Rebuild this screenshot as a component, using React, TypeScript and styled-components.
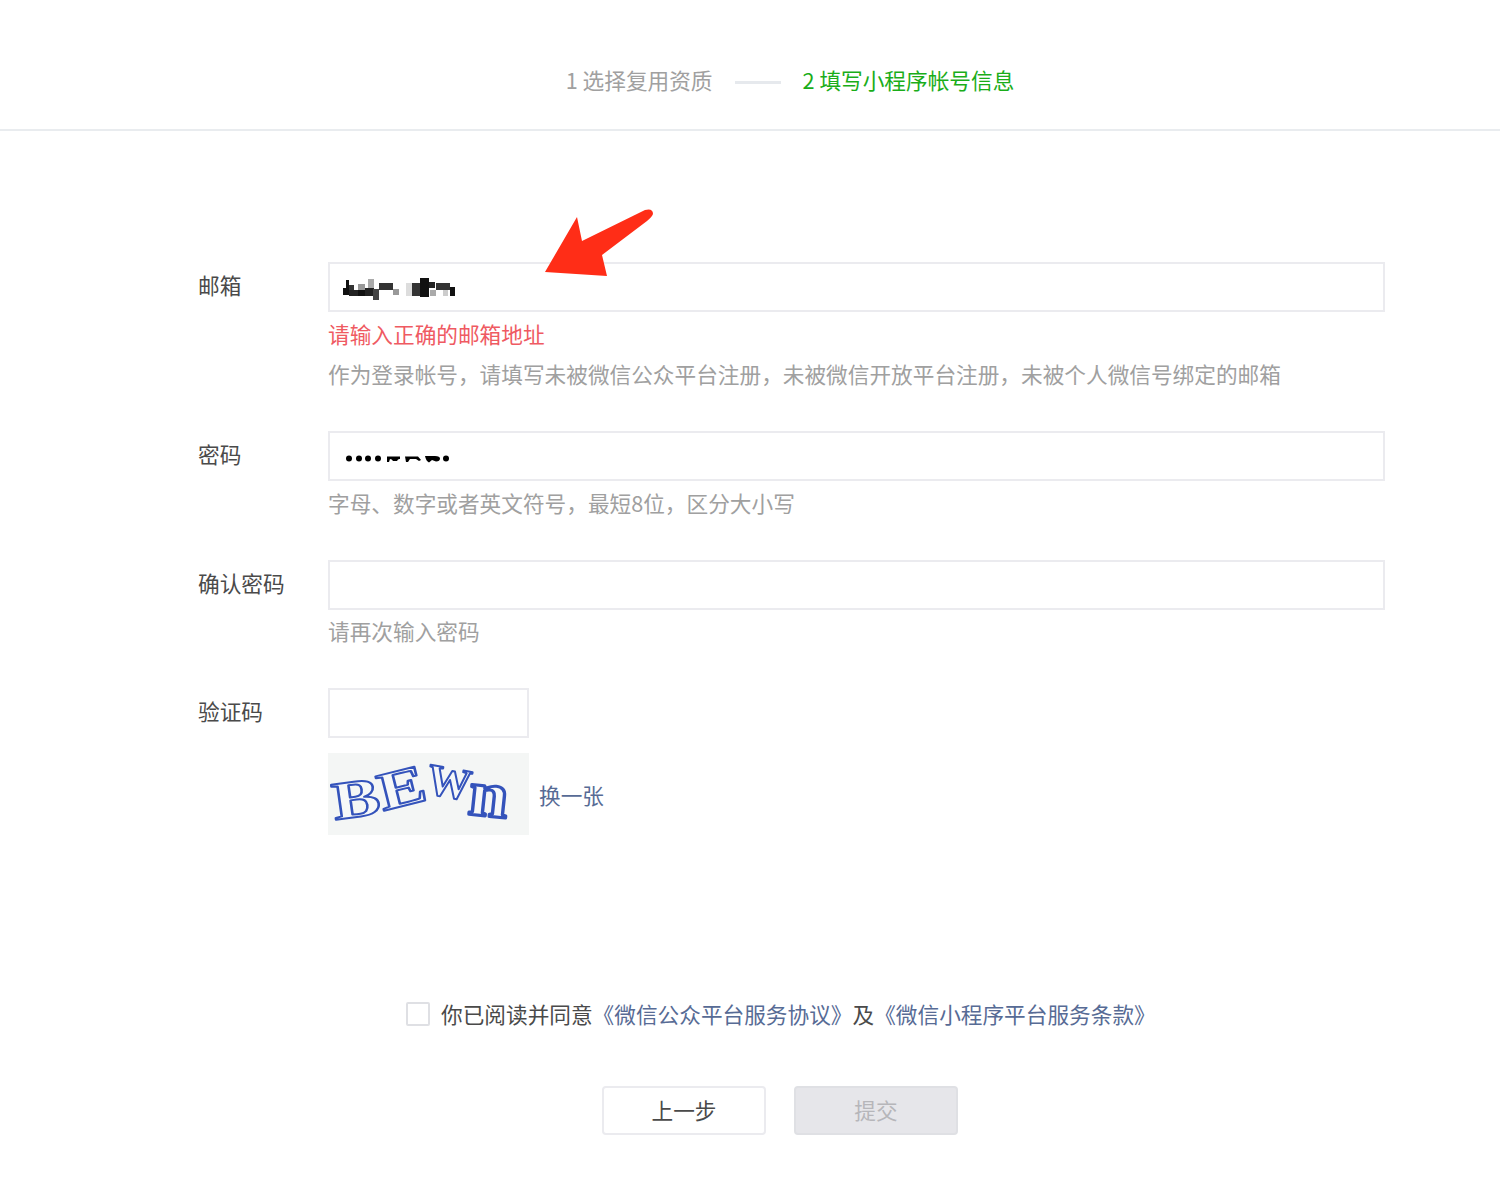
import React from "react";
import styled, { createGlobalStyle } from "styled-components";

const Global = createGlobalStyle`
  html, body { margin: 0; padding: 0; background: #fff; }
  body { font-family: "Noto Sans CJK SC", "Liberation Sans", sans-serif; }
`;

const Page = styled.div`
  width: 1500px;
  height: 1195px;
  position: relative;
  overflow: hidden;
  background: #fff;
`;

const Header = styled.header`
  box-sizing: border-box;
  height: 131px;
  border-bottom: 2px solid #e9ecef;
  display: flex;
  justify-content: center;
  align-items: flex-start;
  padding: 64px 0 0 80px;
`;

const Step = styled.span<{ $active?: boolean }>`
  font-size: 21.66px;
  line-height: 31px;
  color: ${(p) => (p.$active ? "#1aad19" : "#a0a0a0")};
  white-space: nowrap;
`;

const StepLine = styled.span`
  width: 46px;
  height: 3px;
  background: #e6e9ed;
  margin: 17px 22px 0 22px;
`;

const Form = styled.form`
  padding: 131px 0 0 198px;
  display: flex;
  flex-direction: column;
`;

const Row = styled.div<{ $gap: number }>`
  display: flex;
  margin-bottom: ${(p) => p.$gap}px;
`;

const Label = styled.label`
  width: 130px;
  flex: none;
  font-size: 21.66px;
  line-height: 46px;
  color: #4a4a4a;
`;

const Field = styled.div`
  display: flex;
  flex-direction: column;
  width: 1057px;
`;

const InputBox = styled.div<{ $small?: boolean }>`
  box-sizing: border-box;
  position: relative;
  width: ${(p) => (p.$small ? "201px" : "1057px")};
  height: 50px;
  border: 2px solid #ebebef;
  background: #fff;
`;

const MaskSvg = styled.svg`
  position: absolute;
  left: 13px;
  top: 14px;
  overflow: visible;
  filter: blur(0.3px);
`;

const ErrorText = styled.div`
  font-size: 21.66px;
  line-height: 31px;
  color: #ef5a62;
  margin-top: 6px;
`;

const Hint = styled.div<{ $top: number }>`
  font-size: 21.66px;
  line-height: 31px;
  color: #a0a0a0;
  margin-top: ${(p) => p.$top}px;
  white-space: nowrap;
`;

const CaptchaRow = styled.div`
  display: flex;
  align-items: center;
  margin-top: 15px;
`;

const CaptchaImage = styled.svg`
  display: block;
  width: 201px;
  height: 82px;
  background: #f4f6f5;
`;

const CaptchaLetters = styled.g`
  font-family: "Liberation Serif", serif;
  font-weight: 700;
  fill: #f6f8f8;
  stroke: #3453bb;
  stroke-width: 2px;
  stroke-linejoin: round;
  filter: blur(0.45px);
`;

const Link = styled.a`
  color: #576b95;
  font-size: 21.66px;
  line-height: 31px;
  text-decoration: none;
  white-space: nowrap;
`;

const RefreshLink = styled(Link)`
  margin-left: 10px;
`;

const Agreement = styled.div`
  position: absolute;
  top: 998px;
  left: 406px;
  display: flex;
  align-items: center;
  font-size: 21.66px;
  line-height: 31px;
  color: #4a4a4a;
  white-space: nowrap;
`;

const Checkbox = styled.span`
  box-sizing: border-box;
  width: 24px;
  height: 24px;
  border: 2px solid #dfe0e4;
  border-radius: 2px;
  margin-right: 11px;
  flex: none;
`;

const Actions = styled.div`
  position: absolute;
  top: 1086px;
  left: 602px;
  display: flex;
  gap: 28px;
`;

const Button = styled.button<{ $disabled?: boolean }>`
  box-sizing: border-box;
  width: 164px;
  height: 49px;
  border-radius: 4px;
  border: 2px solid ${(p) => (p.$disabled ? "#dfe0e4" : "#ebebef")};
  background: ${(p) => (p.$disabled ? "#e6e6ea" : "#fff")};
  color: ${(p) => (p.$disabled ? "#b6b6ba" : "#4a4a4a")};
  font-family: inherit;
  font-size: 21.66px;
  padding: 0 0 3px;
`;

const Arrow = styled.svg`
  position: absolute;
  left: 540px;
  top: 204px;
`;

const emailBlocks: [number, number, number, number, string][] = [
  [3, 2, 3, 15, "#111"], [0, 10, 4, 7, "#111"], [6, 7, 5, 6, "#333"], [6, 12, 10, 6, "#222"],
  [15, 6, 7, 7, "#999"], [15, 12, 7, 6, "#111"], [25, 1, 6, 11, "#aaa"], [22, 10, 9, 8, "#222"],
  [30, 11, 6, 11, "#444"], [36, 5, 14, 7, "#333"], [50, 11, 6, 6, "#999"],
  [63, 5, 6, 13, "#ddd"], [69, 5, 8, 13, "#333"], [77, 0, 9, 19, "#111"], [86, 4, 6, 6, "#222"], [87, 12, 6, 6, "#aaa"],
  [93, 5, 14, 7, "#333"], [100, 12, 5, 6, "#ccc"], [107, 9, 5, 9, "#111"],
];

const passwordDots = [6, 16, 25, 35, 103];

const App: React.FC = () => (
  <Page>
    <Global />
    <Header>
      <Step>1 选择复用资质</Step>
      <StepLine />
      <Step $active>2 填写小程序帐号信息</Step>
    </Header>
    <Form>
      <Row $gap={42}>
        <Label>邮箱</Label>
        <Field>
          <InputBox>
            <MaskSvg width="114" height="24" viewBox="0 0 114 24">
              {emailBlocks.map(([x, y, w, h, c], i) => (
                <rect key={i} x={x} y={y} width={w} height={h} fill={c} />
              ))}
            </MaskSvg>
          </InputBox>
          <ErrorText>请输入正确的邮箱地址</ErrorText>
          <Hint $top={9}>作为登录帐号，请填写未被微信公众平台注册，未被微信开放平台注册，未被个人微信号绑定的邮箱</Hint>
        </Field>
      </Row>
      <Row $gap={42}>
        <Label>密码</Label>
        <Field>
          <InputBox>
            <MaskSvg width="114" height="24" viewBox="0 0 114 24">
              {passwordDots.map((x) => (
                <circle key={x} cx={x} cy={11.5} r={3} fill="#000" />
              ))}
              <path d="M44 9.5 H57 V12 Q55 11.5 54 14 H50 Q49 12 47 12 L46 15 H44 Z" fill="#000" />
              <path d="M62 9.5 H75 L78 13 L76 14 L73 12 H67 L65 15 H63 Z" fill="#000" />
              <path d="M82 9 H92 Q97 9 97 11.5 Q97 14.5 93 14.5 L89 13 L86 15.5 Q83 14 82 9 Z" fill="#000" />
            </MaskSvg>
          </InputBox>
          <Hint $top={6}>字母、数字或者英文符号，最短8位，区分大小写</Hint>
        </Field>
      </Row>
      <Row $gap={42}>
        <Label>确认密码</Label>
        <Field>
          <InputBox />
          <Hint $top={5}>请再次输入密码</Hint>
        </Field>
      </Row>
      <Row $gap={0}>
        <Label>验证码</Label>
        <Field>
          <InputBox $small />
          <CaptchaRow>
            <CaptchaImage viewBox="0 0 201 82" role="img" aria-label="BEWn">
              <CaptchaLetters>
                <text transform="translate(7 67) rotate(-8) scale(1.32 1)" fontSize="54">B</text>
                <text transform="translate(55 58) rotate(-14) scale(1.32 1)" fontSize="54">E</text>
                <text transform="translate(97 40) rotate(10) scale(1 1)" fontSize="44">W</text>
                <text transform="translate(139 61) rotate(6) scale(1.7 1.55)" fontSize="42">n</text>
              </CaptchaLetters>
            </CaptchaImage>
            <RefreshLink href="#">换一张</RefreshLink>
          </CaptchaRow>
        </Field>
      </Row>
    </Form>
    <Agreement>
      <Checkbox />
      你已阅读并同意
      <Link href="#">《微信公众平台服务协议》</Link>
      及
      <Link href="#">《微信小程序平台服务条款》</Link>
    </Agreement>
    <Actions>
      <Button type="button">上一步</Button>
      <Button type="button" $disabled>提交</Button>
    </Actions>
    <Arrow width="120" height="80" viewBox="0 0 120 80">
      <path
        d="M5 68 L37 13 L42 37 L105 6 Q113 4 113 10 Q112 13 107 17 L62 51 L67 72 Z"
        fill="#ff2d17"
      />
    </Arrow>
  </Page>
);

export default App;
